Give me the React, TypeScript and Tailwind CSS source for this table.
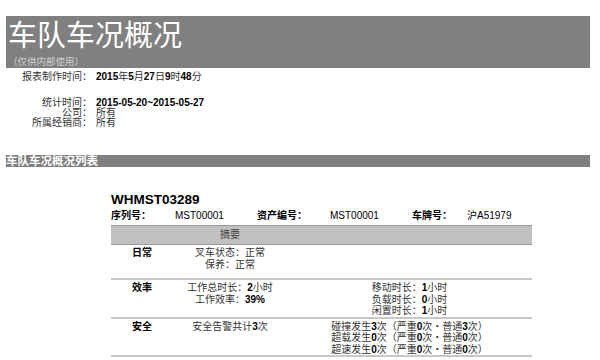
import React from 'react';

const FONT = '"Liberation Sans", "Noto Sans CJK SC", sans-serif';

// digits and latin runs print heavier than the CJK glyphs in the report
function Mix({ text }: { text: string }) {
  const parts = text.split(/([0-9A-Za-z%~\-]+)/);
  return (
    <>
      {parts.map((p, i) =>
        /^[0-9A-Za-z%~\-]+$/.test(p) ? (
          <span key={i} className="font-bold text-black">
            {p}
          </span>
        ) : (
          <span key={i}>{p}</span>
        )
      )}
    </>
  );
}

const rows = [
  { label: '日常', mid: ['叉车状态：正常', '保养：正常'], right: [] as string[] },
  {
    label: '效率',
    mid: ['工作总时长：2小时', '工作效率：39%'],
    right: ['移动时长：1小时', '负载时长：0小时', '闲置时长：1小时'],
  },
  {
    label: '安全',
    mid: ['安全告警共计3次'],
    right: [
      '碰撞发生3次（严重0次・普通3次）',
      '超载发生0次（严重0次・普通0次）',
      '超速发生0次（严重0次・普通0次）',
    ],
  },
];

export default function App() {
  return (
    <div className="w-[600px] h-[360px] overflow-hidden bg-white text-[#333]" style={{ fontFamily: FONT }}>
      <div className="ml-[6px] w-[584px] pt-[16px]">
        {/* title banner */}
        <div className="h-[52px] bg-[#808080] px-[2px] pt-[3px] flex flex-col">
          <div className="text-[29px] leading-[35px] text-white tracking-[0px]">车队车况概况</div>
          <div className="mt-[3px] text-[9.5px] leading-[10px] text-[#cfcfcf]">（仅供内部使用）</div>
        </div>

        {/* report info */}
        <div className="mt-[3px] text-[10px]">
          <div className="flex leading-[12px]">
            <div className="w-[86px] text-right">报表制作时间：</div>
            <div className="ml-[4px]">
              <Mix text="2015年5月27日9时48分" />
            </div>
          </div>
          <div className="mt-[15px] flex leading-[10px]">
            <div className="w-[86px] text-right flex flex-col">
              <span>统计时间：</span>
              <span>公司：</span>
              <span>所属经销商：</span>
            </div>
            <div className="ml-[4px] flex flex-col">
              <span>
                <Mix text="2015-05-20~2015-05-27" />
              </span>
              <span>所有</span>
              <span>所有</span>
            </div>
          </div>
        </div>

        {/* section bar */}
        <div className="mt-[27px] h-[12px] bg-[#808080] text-white font-bold text-[11.5px] leading-[12px]">
          车队车况概况列表
        </div>

        {/* vehicle block */}
        <div className="ml-[105px] w-[421px] mt-[25px]">
          <div className="text-[13.5px] leading-[16px] font-bold text-black">WHMST03289</div>
          <div className="mt-[2px] flex text-[10px] leading-[12px] text-black">
            <div className="w-[64px] font-bold">序列号：</div>
            <div className="w-[82px]">MST00001</div>
            <div className="w-[73px] font-bold">资产编号：</div>
            <div className="w-[82px]">MST00001</div>
            <div className="w-[55px] font-bold">车牌号：</div>
            <div>沪A51979</div>
          </div>

          <div className="mt-[3px] h-[20px] bg-[#c0c0c0] border-y border-[#9a9a9a] flex text-[10px] leading-[18px] text-[#444]">
            <div className="w-[62px]" />
            <div className="w-[114px] text-center">摘要</div>
          </div>

          {rows.map((r) => (
            <div
              key={r.label}
              className="flex min-h-[35px] pt-[1px] border-b-2 border-[#c8c8c8] text-[10px] leading-[11.5px]"
            >
              <div className="w-[62px] text-center font-bold text-black pt-[1px]">{r.label}</div>
              <div className="w-[114px] flex flex-col items-center pt-[1px]">
                {r.mid.map((t) => (
                  <span key={t}>
                    <Mix text={t} />
                  </span>
                ))}
              </div>
              <div className="flex-1 flex flex-col items-center pt-[1px]">
                {r.right.map((t) => (
                  <span key={t}>
                    <Mix text={t} />
                  </span>
                ))}
              </div>
            </div>
          ))}
        </div>
      </div>
    </div>
  );
}
